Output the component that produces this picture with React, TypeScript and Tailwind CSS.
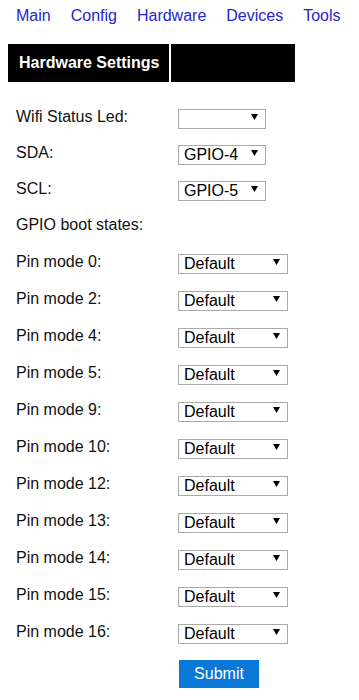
import React from "react";

// ESP-style hardware settings page: top nav, black title bar, label/select rows.

const NAV = ["Main", "Config", "Hardware", "Devices", "Tools"];
const PINS = [0, 2, 4, 5, 9, 10, 12, 13, 14, 15, 16];

function Arrow() {
  return (
    <svg width="7" height="6" viewBox="0 0 7 6" className="pointer-events-none absolute right-[8px] top-1/2 -translate-y-1/2">
      <polygon points="0,0 7,0 3.5,6" fill="#000" />
    </svg>
  );
}

function Picker({ value, width }: { value: string; width: string }) {
  return (
    <div className={`relative h-[20px] ${width}`}>
      <select
        defaultValue={value}
        className="h-full w-full appearance-none border border-[#a9a9a9] bg-white pl-[5px] text-[16px] leading-[18px] text-black outline-none"
      >
        <option value={value}>{value}</option>
      </select>
      <Arrow />
    </div>
  );
}

function Row({ label, h, children }: { label: string; h: string; children?: React.ReactNode }) {
  return (
    <div className={`flex items-center ${h}`}>
      <div className="w-[162px] text-[16px] text-[#111]">{label}</div>
      {children}
    </div>
  );
}

export default function App() {
  return (
    <div className="min-h-[700px] bg-white font-['Liberation_Sans',Arial,sans-serif]">
      <nav className="flex h-[30px] items-center gap-[20px] pl-4 pt-[1px] text-[16px] text-[#2626cc]">
        {NAV.map((n) => (
          <a key={n} href="#" className="whitespace-nowrap">
            {n}
          </a>
        ))}
      </nav>

      <div className="ml-2 mt-[14px] flex h-[38px] w-[287px] gap-[2px]">
        <div className="flex w-[161px] items-center bg-black pl-[11px] text-[16px] font-bold text-white">
          Hardware Settings
        </div>
        <div className="flex-1 bg-black" />
      </div>

      <form className="mt-[17px] pl-4">
        <Row label="Wifi Status Led:" h="h-[36px]">
          <Picker value="" width="w-[88px]" />
        </Row>
        <Row label="SDA:" h="h-[36px]">
          <Picker value="GPIO-4" width="w-[88px]" />
        </Row>
        <Row label="SCL:" h="h-[36px]">
          <Picker value="GPIO-5" width="w-[88px]" />
        </Row>
        <Row label="GPIO boot states:" h="h-[36px]" />
        {PINS.map((p) => (
          <Row key={p} label={`Pin mode ${p}:`} h="h-[37px]">
            <Picker value="Default" width="w-[110px]" />
          </Row>
        ))}
        <div className="mt-[10px] pl-[163px]">
          <button type="button" className="h-[28px] w-[80px] bg-[#0a78d7] text-[16px] text-white">
            Submit
          </button>
        </div>
      </form>
    </div>
  );
}
